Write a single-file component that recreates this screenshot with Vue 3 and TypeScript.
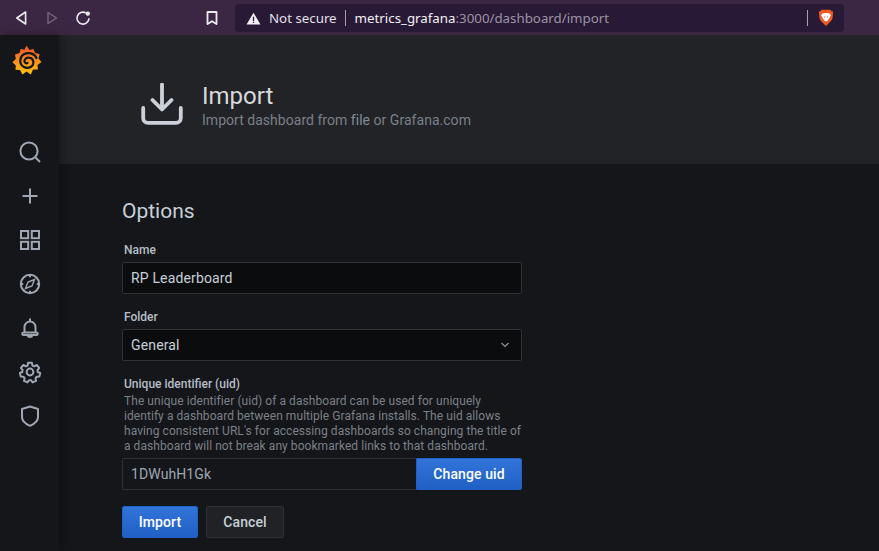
<script setup lang="ts">
const navIcons: string[] = ['search', 'plus', 'apps', 'compass', 'bell', 'gear', 'shield']
</script>

<template>
  <div class="page">
    <header class="toolbar">
      <div class="nav-buttons">
        <svg class="tb-icon" viewBox="0 0 16 16" width="16" height="16"><path d="M12.600 2 3.800 8l8.800 6z" fill="none" stroke="#eceaee" stroke-width="1.600" stroke-linejoin="round" /></svg>
        <svg class="tb-icon" viewBox="0 0 16 16" width="16" height="16"><path d="M4 2.500 12.500 8 4 13.500z" fill="none" stroke="#76667e" stroke-width="1.400" stroke-linejoin="round" /></svg>
        <svg class="tb-icon" viewBox="0 0 16 16" width="16" height="16"><path d="M14 8.200A6 6 0 1 1 10.800 2.800" fill="none" stroke="#eceaee" stroke-width="1.600" /><circle cx="12.800" cy="3.600" r="2.200" fill="#eceaee" /></svg>
      </div>
      <svg class="bookmark" viewBox="0 0 12 14" width="12" height="14"><path d="M1.500 1h9v12L6 10.200 1.500 13z" fill="none" stroke="#eceaee" stroke-width="1.800" stroke-linejoin="round" /></svg>
      <div class="omnibox">
        <svg viewBox="0 0 16 14" width="15" height="13"><path d="M8 .8 15.500 13.500H.5z" fill="#f2f0f3" /><path d="M7.300 5h1.400v4.600H7.300zM7.300 10.400h1.400v1.400H7.300z" fill="#281937" /></svg>
        <span class="secure">Not secure</span>
        <span class="sep"></span>
        <span class="url"><span class="host">metrics_grafana</span><span class="path">:3000/dashboard/import</span></span>
        <span class="spacer"></span>
        <span class="sep end"></span>
        <svg class="brave" viewBox="0 0 16 18" width="16" height="18">
          <path d="M3.600.8h8.800l1.200 1.500 1.600.3-.6 5.900c-.3 2.800-2.400 4.400-3.600 5.400L8 17l-3-3.100C3.800 12.900 1.700 11.300 1.400 8.500L.8 2.600l1.600-.3z" fill="#f05a22" />
          <path d="M4 4.800 6.400 4h3.200L12 4.800l.7 1.500-1.500 3.200-1.300 1.700L8 12.600l-1.900-1.400-1.300-1.700-1.500-3.200z" fill="#fff" />
          <path d="M6.100 7.600 7 8.400M9.900 7.600 9 8.400" stroke="#f05a22" stroke-width="1" />
        </svg>
      </div>
    </header>

    <div class="body">
      <aside class="sidebar">
        <svg class="logo" viewBox="0 0 30 31" width="30" height="32">
          <defs>
            <linearGradient id="gf" x1="0" y1="1" x2="0" y2="0">
              <stop offset="0" stop-color="#fcc30f" />
              <stop offset=".55" stop-color="#f5861f" />
              <stop offset="1" stop-color="#ef4f27" />
            </linearGradient>
          </defs>
          <path d="M14.500 1 17.500 5.500 21.500 4.500 23 8.500 27.500 9.500 26.500 14 29.500 17.500 25.500 20.500 25.800 25 21 25 18.800 30 14.500 27 10.500 30 8 25.500 3.500 25.300 3.800 21 .4 17.700 3.800 14.500 3 10 7.500 8.500 8.800 4.300 12.500 5.200z" fill="url(#gf)" />
          <path d="M24.500 13.500C22.500 8.500 16 7.500 12 9.800 7.300 12.500 6.800 19.800 12 22.500 16.500 24.800 22 22 21.300 16.800 20.700 12.800 15 12 13 14.800 11.500 17 13.300 19.500 15.500 18.500" fill="none" stroke="#141619" stroke-width="2.200" stroke-linecap="round" />
        </svg>
        <nav class="nav-list">
          <span v-for="icon in navIcons" :key="icon" class="nav-item">
            <svg v-if="icon === 'search'" viewBox="0 0 24 24" width="24" height="24"><circle cx="11" cy="11" r="8.600" /><path d="m17.500 17.500 4.500 4.500" /></svg>
            <svg v-else-if="icon === 'plus'" viewBox="0 0 24 24" width="24" height="24"><path d="M12 4.500v15M4.500 12h15" /></svg>
            <svg v-else-if="icon === 'apps'" viewBox="0 0 24 24" width="24" height="24"><rect x="3" y="3" width="7.200" height="7.200" /><rect x="13.800" y="3" width="7.200" height="7.200" /><rect x="3" y="13.800" width="7.200" height="7.200" /><rect x="13.800" y="13.800" width="7.200" height="7.200" /></svg>
            <svg v-else-if="icon === 'compass'" viewBox="0 0 24 24" width="24" height="24"><circle cx="12" cy="12" r="9.200" /><path d="M12 2.800v2.400M12 18.800v2.400M2.800 12h2.400M18.800 12h2.400" /><path d="M16.500 7.500 14 14l-6.500 2.500L10 10z" fill="none" stroke-width="1.400" /></svg>
            <svg v-else-if="icon === 'bell'" viewBox="0 0 24 24" width="24" height="24"><path d="M6.500 16v-5a5.500 5.500 0 0 1 11 0v5M12 2.500v3M5.500 16.500h13a1.300 1.300 0 0 1 0 2.600h-13a1.300 1.300 0 0 1 0-2.600zM9.700 19.500c.4 2 4.200 2 4.600 0" /></svg>
            <svg v-else-if="icon === 'gear'" viewBox="0 0 24 24" width="24" height="24"><circle cx="12" cy="12" r="3.400" /><path d="M10.100 2.700h3.800l.6 2.800 1.700.8 2.500-1.300 2.500 2.900-1.700 2.200.3 1.900 2.400 1-.8 3.600-2.700.1-1.200 1.500.6 2.700-3.400 1.500-1.700-2.200h-1.900l-1.700 2.200-3.400-1.500.6-2.700-1.200-1.500-2.700-.1-.8-3.600 2.400-1 .3-1.900-1.700-2.200 2.500-2.900 2.500 1.300 1.700-.8z" stroke-linejoin="round" /></svg>
            <svg v-else viewBox="0 0 24 24" width="24" height="24"><path d="M12 2.500 20 5v8c0 4.400-4.400 7.300-8 8.800-3.600-1.500-8-4.400-8-8.800V5z" stroke-linejoin="round" /></svg>
          </span>
        </nav>
      </aside>

      <main class="main">
        <section class="hero">
          <svg class="hero-icon" viewBox="0 0 42 42" width="42" height="42">
            <path d="M21 1.500V26M11.500 17 21 26.500 30.500 17" fill="none" stroke="#ccd1d9" stroke-width="3.800" stroke-linecap="round" stroke-linejoin="round" />
            <path d="M2.200 25v10c0 2.800 2 4.800 4.800 4.800h28c2.800 0 4.800-2 4.800-4.800V25" fill="none" stroke="#ccd1d9" stroke-width="3.800" stroke-linecap="round" />
          </svg>
          <div class="hero-text">
            <h1>Import</h1>
            <p>Import dashboard from <span class="link">file</span> or Grafana.com</p>
          </div>
        </section>

        <section class="content">
          <h2>Options</h2>
          <label class="label first">Name</label>
          <div class="input">RP Leaderboard</div>
          <label class="label">Folder</label>
          <div class="input select">
            <span>General</span>
            <svg viewBox="0 0 10 6" width="10" height="6"><path d="M1.500 1 5 4.500 8.500 1" fill="none" stroke="#8e95a0" stroke-width="1.200" /></svg>
          </div>
          <label class="label uid">Unique identifier (uid)</label>
          <p class="desc">The unique identifier (uid) of a dashboard can be used for uniquely identify a dashboard between multiple Grafana installs. The uid allows having consistent URL's for accessing dashboards so changing the title of a dashboard will not break any bookmarked links to that dashboard.</p>
          <div class="uid-row">
            <div class="input uid-input">1DWuhH1Gk</div>
            <button class="btn primary attached">Change uid</button>
          </div>
          <div class="actions">
            <button class="btn primary">Import</button>
            <button class="btn secondary">Cancel</button>
          </div>
        </section>
      </main>
    </div>
  </div>
</template>

<style>
html, body { margin: 0; background: #141619; overflow: hidden; }
</style>

<style scoped>
.page { width: 879px; height: 551px; display: flex; flex-direction: column; overflow: hidden; font-family: Roboto, sans-serif; background: #141619; }
.toolbar { height: 35px; flex: none; background: #3b2743; display: flex; align-items: center; box-sizing: border-box; padding: 0 35px 0 13px; }
.nav-buttons { display: flex; gap: 15px; align-items: center; width: 193px; }
.tb-icon { flex: none; }
.bookmark { flex: none; margin-right: 17px; }
.omnibox { flex: 1; height: 28px; margin-top: 1px; background: #281937; border-radius: 4px; display: flex; align-items: center; padding: 0 10px 0 11px; font-family: "Noto Sans", sans-serif; font-size: 13.300px; }
.secure { color: #e4e1e8; margin-left: 8px; }
.sep { width: 1px; height: 16px; background: #a9a1ae; margin: 0 9px 0 8px; flex: none; }
.sep.end { margin: 0 10px 0 0; }
.host { color: #f4f2f5; }
.path { color: #9c95a2; }
.spacer { flex: 1; }
.brave { flex: none; }
.body { flex: 1; min-height: 0; display: flex; }
.sidebar { width: 59px; flex: none; background: #141619; display: flex; flex-direction: column; align-items: center; position: relative; z-index: 1; box-shadow: 2px 0 10px rgba(0, 0, 0, .35); }
.logo { margin-top: 9px; margin-left: -5px; flex: none; }
.nav-list { display: flex; flex-direction: column; margin-top: 54px; }
.nav-item { height: 44px; width: 44px; display: flex; align-items: center; justify-content: center; margin-left: 1px; }
.nav-item svg { fill: none; stroke: #9fa7b3; stroke-width: 2; }
.main { flex: 1; min-width: 0; background: #141619; }
.hero { height: 129px; background: #212327; box-sizing: border-box; padding: 48px 0 0 82px; display: flex; align-items: flex-start; }
.hero-icon { flex: none; margin-right: 19px; }
.hero-text { margin-top: 0; }
h1 { margin: 0; font-size: 24px; font-weight: 400; line-height: 26px; color: #d8d9da; }
.hero-text p { margin: 2px 0 0; font-size: 14px; line-height: 18px; color: #7b8087; letter-spacing: .03px; }
.link { color: #858b96; }
.content { padding: 35px 0 0 63px; width: 400px; }
h2 { margin: 0; font-size: 21px; font-weight: 400; line-height: 24px; color: #c7d0d9; }
.label { display: block; margin: 16px 2px 4px; font-size: 12px; font-weight: 500; line-height: 15px; color: #b7bec8; height: 15px; }
.label.first { margin-top: 20px; margin-bottom: 4px; }
.label.uid { margin-top: 16px; margin-bottom: 0; }
.input { box-sizing: content-box; border: 1px solid #2c3235; border-radius: 2px; background: #0b0c0e; color: #c7d0d9; font-size: 14px; letter-spacing: .15px; line-height: 30px; height: 30px; padding: 0 8px; }
.select { display: flex; justify-content: space-between; align-items: center; }
.select svg { margin-right: 3px; }
.desc { margin: 2px 0 4px 2px; font-size: 12px; line-height: 15px; color: #7b8087; width: 399px; letter-spacing: .06px; }
.uid-row { display: flex; }
.uid-input { flex: 1; min-width: 0; background: #141619; color: #9fa7b3; border-right: 0; border-radius: 2px 0 0 2px; letter-spacing: .1px; }
.btn { height: 32px; border: 1px solid; border-radius: 2px; font-family: Roboto, sans-serif; font-size: 14px; font-weight: 500; letter-spacing: .1px; padding: 0; }
.primary { background: linear-gradient(180deg, #3274d9, #1f60c4); border-color: #1f60c4; color: #fff; width: 76px; }
.attached { width: 106px; border-radius: 0 2px 2px 0; }
.secondary { background: #202226; border-color: #2c3235; color: #c7d0d9; width: 78px; }
.actions { display: flex; gap: 8px; margin-top: 16px; }
</style>
